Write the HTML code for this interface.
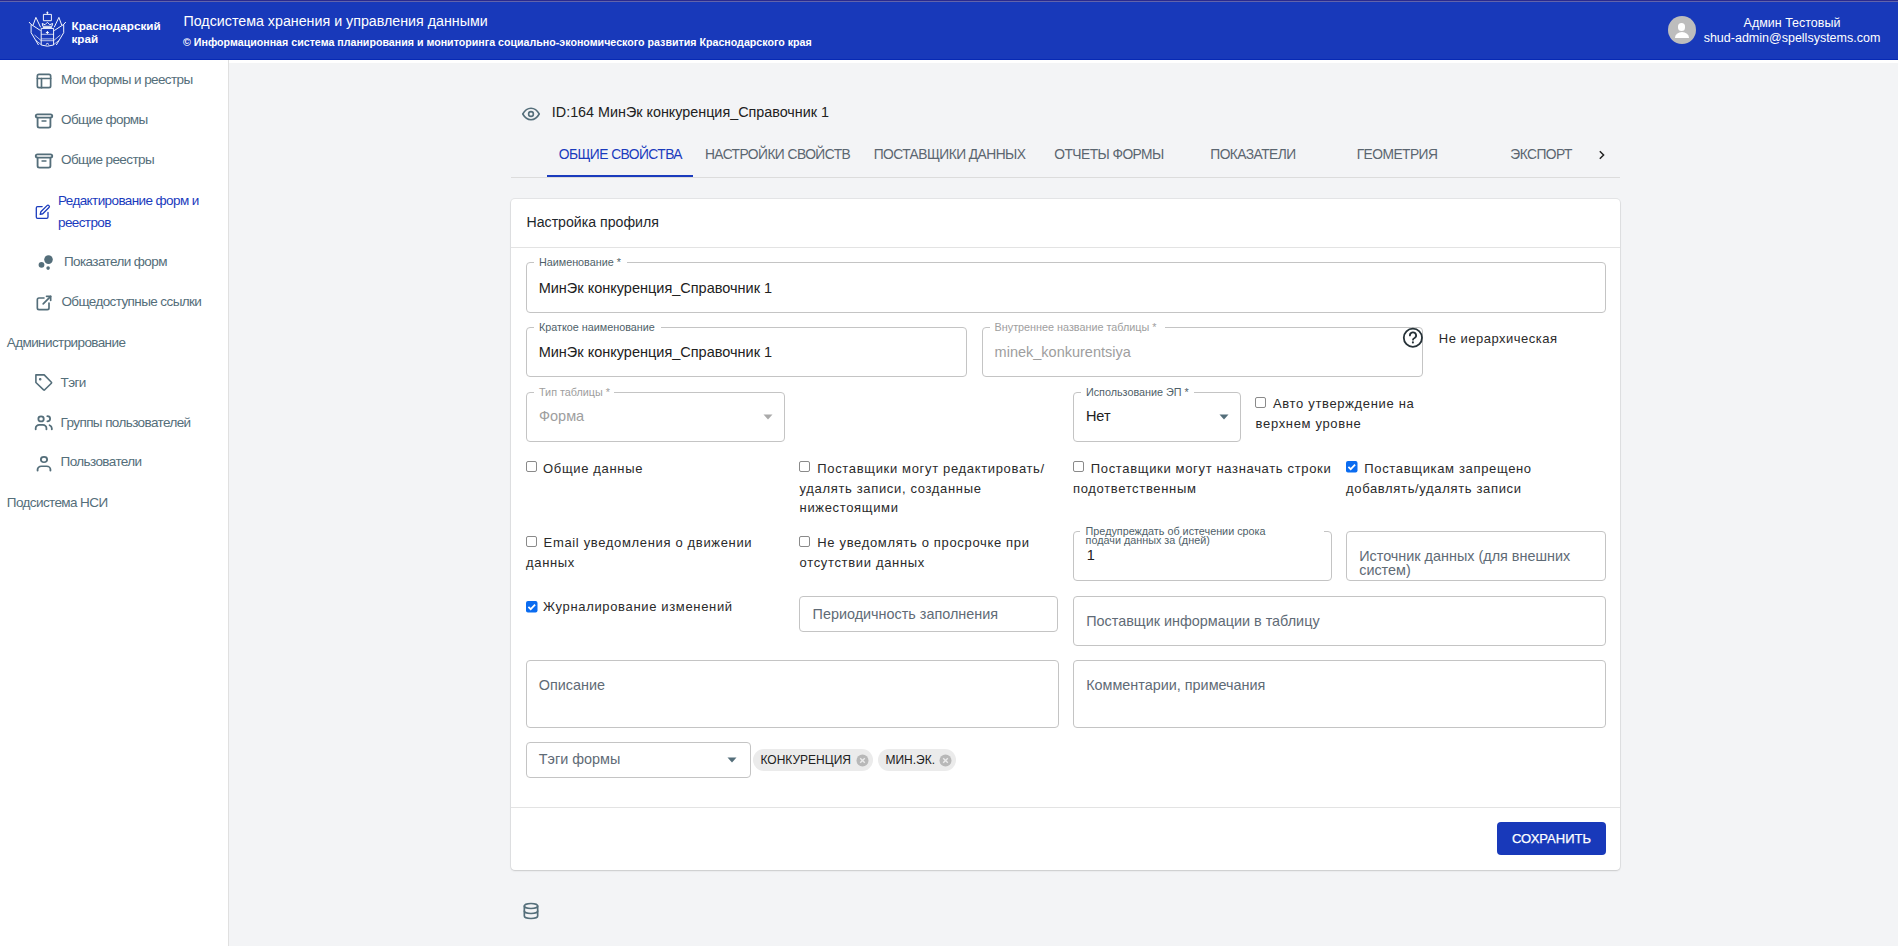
<!DOCTYPE html>
<html><head><meta charset="utf-8">
<style>
*{box-sizing:border-box;margin:0;padding:0}
html,body{width:1898px;height:946px;overflow:hidden;background:#f3f4f6;font-family:"Liberation Sans",sans-serif}
body{position:relative}
.a{position:absolute;white-space:nowrap}
svg.a{overflow:visible}
</style></head><body>
<div class="a" style="left:0px;top:0px;width:1898px;height:60px;background:#1839ba"></div>
<div class="a" style="left:0px;top:0px;width:1898px;height:1px;background:#2a2a8f"></div>
<div class="a" style="left:0px;top:1px;width:1898px;height:1px;background:#6264ab"></div>
<div class="a" style="left:0px;top:59px;width:1898px;height:1px;background:#0729b4"></div>
<svg class="a" style="left:27px;top:10px" width="42" height="39" viewBox="0 0 42 39" fill="none" stroke="#fff" stroke-width="0.95" stroke-linejoin="round">
<path d="M20.4 1.5v2.6M19.4 2.7h2"/>
<rect x="16.4" y="4.4" width="8" height="6.3"/>
<path d="M15.8 16.3l-0.6-2.8 2.8 1.2 2.4-2.4 2.4 2.4 2.8-1.2-0.6 2.8z"/>
<path d="M15.9 17.6h9"/>
<path d="M14.2 18.4h12.4v16.6l-6.2 1.2-6.2-1.2z"/>
<path d="M14.2 24.3h12.4M14.2 28.9h12.4M14.2 30.7h12.4" stroke-width="0.7"/>
<path d="M18.9 22.5h3M20.4 21v3"/>
<path d="M19.2 34.6a1.2 1.2 0 0 1 2.4 0"/>
<path d="M2 12l2.1 2.4v8.3l7.4 12.3"/>
<path d="M4.1 14.4l9.5 6.2"/>
<path d="M8.9 7.4l-2.9 7.9M8.9 7.4l4.7 9.9"/>
<path d="M7.5 25l6.5 5.5M9 30.5l5 4" stroke-width="0.7"/>
<path d="M38.8 12l-2.1 2.4v8.3l-7.4 12.3"/>
<path d="M36.7 14.4l-9.5 6.2"/>
<path d="M31.9 7.4l2.9 7.9M31.9 7.4l-4.7 9.9"/>
<path d="M33.3 25l-6.5 5.5M31.8 30.5l-5 4" stroke-width="0.7"/>
</svg>
<div class="a" style="left:71.5px;top:19.7px;font-size:11.7px;line-height:12.9px;font-weight:700;color:#fff">Краснодарский<br>край</div>
<div class="a" style="left:183.50px;top:13.84px;font-size:14.25px;line-height:14.25px;color:#fff">Подсистема хранения и управления данными</div>
<div class="a" style="left:183.00px;top:36.67px;font-size:10.67px;line-height:10.67px;color:#fff;font-weight:700">© Информационная система планирования и мониторинга социально-экономического развития Краснодарского края</div>
<div class="a" style="left:1668px;top:16px;width:28px;height:28px;border-radius:50%;background:#bdbdbd;overflow:hidden">
<div class="a" style="left:10px;top:7.2px;width:7.4px;height:7.4px;border-radius:50%;background:#fff"></div>
<div class="a" style="left:6.5px;top:16.2px;width:14.5px;height:5.9px;border-radius:7.25px 7.25px 0 0/5.9px 5.9px 0 0;background:#fff"></div>
</div>
<div class="a" style="left:1692px;top:0;width:200px;height:60px;text-align:center;color:#fff;font-size:12.5px"><div class="a" style="left:0;width:200px;top:16.82px;line-height:12.5px;text-align:center">Админ Тестовый</div><div class="a" style="left:0;width:200px;top:32.22px;line-height:12.5px;text-align:center">shud-admin@spellsystems.com</div></div>
<div class="a" style="left:0px;top:60px;width:228px;height:886px;background:#fff"></div>
<div class="a" style="left:228px;top:60px;width:1px;height:886px;background:#e0e0e0"></div>
<div class="a" style="left:229px;top:60px;width:1669px;height:3px;background:#fff"></div>
<div class="a" style="left:61.00px;top:72.57px;font-size:13.5px;line-height:13.5px;color:#546e7a;letter-spacing:-0.6px">Мои формы и реестры</div>
<div class="a" style="left:61.00px;top:113.37px;font-size:13.5px;line-height:13.5px;color:#546e7a;letter-spacing:-0.6px">Общие формы</div>
<div class="a" style="left:61.00px;top:153.37px;font-size:13.5px;line-height:13.5px;color:#546e7a;letter-spacing:-0.6px">Общие реестры</div>
<div class="a" style="left:58.00px;top:193.87px;font-size:13.5px;line-height:13.5px;color:#1a3bbd;letter-spacing:-0.6px">Редактирование форм и</div>
<div class="a" style="left:58.00px;top:215.87px;font-size:13.5px;line-height:13.5px;color:#1a3bbd;letter-spacing:-0.6px">реестров</div>
<div class="a" style="left:64.00px;top:255.07px;font-size:13.5px;line-height:13.5px;color:#546e7a;letter-spacing:-0.6px">Показатели форм</div>
<div class="a" style="left:61.40px;top:295.37px;font-size:13.5px;line-height:13.5px;color:#546e7a;letter-spacing:-0.6px">Общедоступные ссылки</div>
<div class="a" style="left:6.80px;top:335.87px;font-size:13.5px;line-height:13.5px;color:#546e7a;letter-spacing:-0.6px">Администрирование</div>
<div class="a" style="left:60.60px;top:375.57px;font-size:13.5px;line-height:13.5px;color:#546e7a;letter-spacing:-0.6px">Тэги</div>
<div class="a" style="left:60.60px;top:415.57px;font-size:13.5px;line-height:13.5px;color:#546e7a;letter-spacing:-0.6px">Группы пользователей</div>
<div class="a" style="left:60.60px;top:455.47px;font-size:13.5px;line-height:13.5px;color:#546e7a;letter-spacing:-0.6px">Пользователи</div>
<div class="a" style="left:6.80px;top:495.57px;font-size:13.5px;line-height:13.5px;color:#546e7a;letter-spacing:-0.6px">Подсистема НСИ</div>
<svg class="a" style="left:34px;top:71px" width="20" height="20" viewBox="0 0 24 24" fill="none" stroke="#546e7a" stroke-width="2" stroke-linecap="round" stroke-linejoin="round"><path d="M4 4m0 2a2 2 0 0 1 2 -2h12a2 2 0 0 1 2 2v12a2 2 0 0 1 -2 2h-12a2 2 0 0 1 -2 -2z"/><path d="M4 9h16"/><path d="M9 9v11"/></svg>
<svg class="a" style="left:33px;top:111px" width="22" height="20" viewBox="0 0 24 24" preserveAspectRatio="none" fill="none" stroke="#546e7a" stroke-width="2" stroke-linecap="round" stroke-linejoin="round"><path d="M3 4m0 2a2 2 0 0 1 2 -2h14a2 2 0 0 1 2 2v0a2 2 0 0 1 -2 2h-14a2 2 0 0 1 -2 -2z"/><path d="M5 8v10a2 2 0 0 0 2 2h10a2 2 0 0 0 2 -2v-10"/><path d="M10 12l4 0"/></svg>
<svg class="a" style="left:33px;top:151px" width="22" height="20" viewBox="0 0 24 24" preserveAspectRatio="none" fill="none" stroke="#546e7a" stroke-width="2" stroke-linecap="round" stroke-linejoin="round"><path d="M3 4m0 2a2 2 0 0 1 2 -2h14a2 2 0 0 1 2 2v0a2 2 0 0 1 -2 2h-14a2 2 0 0 1 -2 -2z"/><path d="M5 8v10a2 2 0 0 0 2 2h10a2 2 0 0 0 2 -2v-10"/><path d="M10 12l4 0"/></svg>
<svg class="a" style="left:34.6px;top:203.8px" width="15.6" height="15.6" viewBox="0 0 24 24" fill="none" stroke="#1a3bbd" stroke-width="2" stroke-linecap="round" stroke-linejoin="round"><path d="M11 4H4a2 2 0 0 0-2 2v14a2 2 0 0 0 2 2h14a2 2 0 0 0 2-2v-7"/><path d="M18.5 2.5a2.121 2.121 0 0 1 3 3L12 15l-4 1 1-4 9.5-9.5z"/></svg>
<svg class="a" style="left:37px;top:255px" width="18" height="18" viewBox="0 0 18 18"><circle cx="4.5" cy="9.8" r="2.9" fill="#546e7a"/><circle cx="11.5" cy="4.6" r="4.3" fill="#546e7a"/><circle cx="11.1" cy="13.1" r="1.8" fill="#546e7a"/></svg>
<svg class="a" style="left:34px;top:293px" width="20" height="20" viewBox="0 0 24 24" fill="none" stroke="#546e7a" stroke-width="2" stroke-linecap="round" stroke-linejoin="round"><path d="M12 6h-6a2 2 0 0 0 -2 2v10a2 2 0 0 0 2 2h10a2 2 0 0 0 2 -2v-6"/><path d="M11 13l9 -9"/><path d="M15 4h5v5"/></svg>
<svg class="a" style="left:33px;top:373px" width="20" height="20" viewBox="0 0 20 20" fill="none" stroke="#546e7a" stroke-width="1.6" stroke-linecap="round" stroke-linejoin="round"><path d="M2.9 1.9h8.3l7.2 7.3q0.5 0.5 0 1l-6.7 6.6q-0.6 0.5 -1.1 0l-7.7 -7.3z"/><circle cx="7.2" cy="6.3" r="0.5" fill="#546e7a"/></svg>
<svg class="a" style="left:32.5px;top:411.8px" width="21.5" height="20" viewBox="0 0 24 24" preserveAspectRatio="none" fill="none" stroke="#546e7a" stroke-width="2" stroke-linecap="round" stroke-linejoin="round"><path d="M9 8.3m-3 0a3 3 0 1 0 6 0a3 3 0 1 0 -6 0"/><path d="M3 21v-1.5a4 4 0 0 1 4 -4h4a4 4 0 0 1 4 4v1.5"/><path d="M16 5a3.1 3.1 0 0 1 0 6.2"/><path d="M21 21v-1.5a4 4 0 0 0 -2.5 -3.7"/></svg>
<svg class="a" style="left:33px;top:453.5px" width="22" height="19" viewBox="0 0 24 24" preserveAspectRatio="none" fill="none" stroke="#546e7a" stroke-width="2" stroke-linecap="round" stroke-linejoin="round"><path d="M8.6 7a3.4 3.4 0 1 0 6.8 0a3.4 3.4 0 0 0 -6.8 0"/><path d="M5 21v-1.5a4 4 0 0 1 4 -4h6a4 4 0 0 1 4 4v1.5"/></svg>
<svg class="a" style="left:520px;top:102.8px" width="22" height="22" viewBox="0 0 24 24" fill="none" stroke="#546e7a" stroke-width="1.75" stroke-linecap="round" stroke-linejoin="round"><circle cx="12" cy="12" r="2.6"/><path d="M21 12c-2.4 4.2 -5.4 6.2 -9 6.2c-3.6 0 -6.6 -2 -9 -6.2c2.4 -4.2 5.4 -6.2 9 -6.2c3.6 0 6.6 2 9 6.2"/></svg>
<div class="a" style="left:551.80px;top:104.75px;font-size:14.35px;line-height:14.35px;color:#212121">ID:164 МинЭк конкуренция_Справочник 1</div>
<div class="a" style="left:558.80px;top:148.02px;font-size:13.8px;line-height:13.8px;color:#1a3bbd;letter-spacing:-0.55px">ОБЩИЕ СВОЙСТВА</div>
<div class="a" style="left:704.90px;top:148.02px;font-size:13.8px;line-height:13.8px;color:#5b6670;letter-spacing:-0.55px">НАСТРОЙКИ СВОЙСТВ</div>
<div class="a" style="left:873.70px;top:148.02px;font-size:13.8px;line-height:13.8px;color:#5b6670;letter-spacing:-0.55px">ПОСТАВЩИКИ ДАННЫХ</div>
<div class="a" style="left:1054.30px;top:148.02px;font-size:13.8px;line-height:13.8px;color:#5b6670;letter-spacing:-0.55px">ОТЧЕТЫ ФОРМЫ</div>
<div class="a" style="left:1210.30px;top:148.02px;font-size:13.8px;line-height:13.8px;color:#5b6670;letter-spacing:-0.55px">ПОКАЗАТЕЛИ</div>
<div class="a" style="left:1356.70px;top:148.02px;font-size:13.8px;line-height:13.8px;color:#5b6670;letter-spacing:-0.55px">ГЕОМЕТРИЯ</div>
<div class="a" style="left:1510.30px;top:148.02px;font-size:13.8px;line-height:13.8px;color:#5b6670;letter-spacing:-0.55px">ЭКСПОРТ</div>
<svg class="a" style="left:1596px;top:149px" width="12" height="12" viewBox="0 0 12 12" fill="none" stroke="#222" stroke-width="1.5"><path d="M3.8 2.2l3.8 3.8-3.8 3.8"/></svg>
<div class="a" style="left:511px;top:177px;width:1109px;height:1px;background:#dcdcdc"></div>
<div class="a" style="left:547px;top:175px;width:146px;height:2px;background:#1a3bbd"></div>
<div class="a" style="left:511px;top:199px;width:1109px;height:671px;background:#fff;border-radius:4px;box-shadow:0 0 0 1px rgba(0,0,0,0.06),0 1px 2px rgba(0,0,0,0.12)"></div>
<div class="a" style="left:526.50px;top:214.92px;font-size:14.15px;line-height:14.15px;color:#1e272c">Настройка профиля</div>
<div class="a" style="left:511px;top:247px;width:1109px;height:1px;background:#e3e3e3"></div>
<div class="a" style="left:511px;top:807px;width:1109px;height:1px;background:#e3e3e3"></div>
<div class="a" style="left:526px;top:262px;width:1080px;height:51px;border:1px solid #c4c4c4;border-radius:4px;background:#fff"></div>
<div class="a" style="left:534px;top:261px;width:93px;height:3px;background:#fff"></div>
<div class="a" style="left:538.90px;top:256.76px;font-size:10.8px;line-height:10.8px;color:#4f5f69">Наименование *</div>
<div class="a" style="left:538.70px;top:280.53px;font-size:14.5px;line-height:14.5px;color:#212121">МинЭк конкуренция_Справочник 1</div>
<div class="a" style="left:526px;top:327px;width:441px;height:50px;border:1px solid #c4c4c4;border-radius:4px;background:#fff"></div>
<div class="a" style="left:534px;top:326px;width:127px;height:3px;background:#fff"></div>
<div class="a" style="left:538.90px;top:321.66px;font-size:10.8px;line-height:10.8px;color:#4f5f69">Краткое наименование</div>
<div class="a" style="left:538.70px;top:345.23px;font-size:14.5px;line-height:14.5px;color:#212121">МинЭк конкуренция_Справочник 1</div>
<div class="a" style="left:982px;top:327px;width:441px;height:50px;border:1px solid #c4c4c4;border-radius:4px;background:#fff"></div>
<div class="a" style="left:990px;top:326px;width:175px;height:3px;background:#fff"></div>
<div class="a" style="left:994.60px;top:321.66px;font-size:10.8px;line-height:10.8px;color:#9e9e9e">Внутреннее название таблицы *</div>
<div class="a" style="left:994.60px;top:344.53px;font-size:14.5px;line-height:14.5px;color:#9e9e9e">minek_konkurentsiya</div>
<svg class="a" style="left:1401px;top:326px" width="24" height="24" viewBox="0 0 24 24" fill="none" stroke="#263238" stroke-width="1.8" stroke-linecap="round" stroke-linejoin="round"><circle cx="11.9" cy="11.8" r="9.1"/><path d="M8.9 9.4a3.1 3.05 0 1 1 4.4 2.8c-.8.4-1.3.9-1.3 1.5"/><path d="M11.9 16.4v.05" stroke-width="2.1"/></svg>
<div class="a" style="left:1438.80px;top:331.60px;font-size:13px;line-height:13px;color:#2a2a2a;letter-spacing:0.5px">Не иерархическая</div>
<div class="a" style="left:526px;top:392px;width:259px;height:50px;border:1px solid #c4c4c4;border-radius:4px;background:#fff"></div>
<div class="a" style="left:534px;top:391px;width:80px;height:3px;background:#fff"></div>
<div class="a" style="left:539.00px;top:386.66px;font-size:10.8px;line-height:10.8px;color:#9e9e9e">Тип таблицы *</div>
<div class="a" style="left:539.00px;top:408.53px;font-size:14.5px;line-height:14.5px;color:#9e9e9e">Форма</div>
<svg class="a" style="left:763px;top:414px" width="10" height="6" viewBox="0 0 10 6"><path d="M0.5 0.5h9l-4.5 5z" fill="#aaaaaa"/></svg>
<div class="a" style="left:1073px;top:392px;width:168px;height:50px;border:1px solid #c4c4c4;border-radius:4px;background:#fff"></div>
<div class="a" style="left:1081px;top:391px;width:113px;height:3px;background:#fff"></div>
<div class="a" style="left:1085.90px;top:386.66px;font-size:10.8px;line-height:10.8px;color:#4f5f69">Использование ЭП *</div>
<div class="a" style="left:1085.90px;top:408.53px;font-size:14.5px;line-height:14.5px;color:#212121">Нет</div>
<svg class="a" style="left:1219px;top:414px" width="10" height="6" viewBox="0 0 10 6"><path d="M0.5 0.5h9l-4.5 5z" fill="#546e7a"/></svg>
<div class="a" style="left:1255px;top:396.7px;width:11px;height:11px;border:1px solid #8a8a8a;border-radius:2px;background:#fff"></div>
<div class="a" style="left:1273.00px;top:397.10px;font-size:13px;line-height:13px;color:#2a2a2a;letter-spacing:0.66px">Авто утверждение на</div>
<div class="a" style="left:1255.60px;top:417.20px;font-size:13px;line-height:13px;color:#2a2a2a;letter-spacing:0.66px">верхнем уровне</div>
<div class="a" style="left:526px;top:461px;width:11px;height:11px;border:1px solid #8a8a8a;border-radius:2px;background:#fff"></div>
<div class="a" style="left:543.00px;top:462.00px;font-size:13px;line-height:13px;color:#2a2a2a;letter-spacing:0.66px">Общие данные</div>
<div class="a" style="left:799px;top:461px;width:11px;height:11px;border:1px solid #8a8a8a;border-radius:2px;background:#fff"></div>
<div class="a" style="left:817.30px;top:462.00px;font-size:13px;line-height:13px;color:#2a2a2a;letter-spacing:0.66px">Поставщики могут редактировать/</div>
<div class="a" style="left:799.60px;top:481.60px;font-size:13px;line-height:13px;color:#2a2a2a;letter-spacing:0.66px">удалять записи, созданные</div>
<div class="a" style="left:799.60px;top:500.80px;font-size:13px;line-height:13px;color:#2a2a2a;letter-spacing:0.66px">нижестоящими</div>
<div class="a" style="left:1073px;top:461px;width:11px;height:11px;border:1px solid #8a8a8a;border-radius:2px;background:#fff"></div>
<div class="a" style="left:1090.80px;top:462.00px;font-size:13px;line-height:13px;color:#2a2a2a;letter-spacing:0.66px">Поставщики могут назначать строки</div>
<div class="a" style="left:1073.00px;top:481.60px;font-size:13px;line-height:13px;color:#2a2a2a;letter-spacing:0.66px">подответственным</div>
<svg class="a" style="left:1346px;top:461px" width="11.5" height="11.5" viewBox="0 0 12 12"><rect x="0" y="0" width="12" height="12" rx="2" fill="#0b6cf0"/><path d="M2.5 6.1l2.4 2.4 4.6-4.8" fill="none" stroke="#fff" stroke-width="1.8"/></svg>
<div class="a" style="left:1364.30px;top:462.00px;font-size:13px;line-height:13px;color:#2a2a2a;letter-spacing:0.66px">Поставщикам запрещено</div>
<div class="a" style="left:1346.00px;top:481.60px;font-size:13px;line-height:13px;color:#2a2a2a;letter-spacing:0.66px">добавлять/удалять записи</div>
<div class="a" style="left:526px;top:535.5px;width:11px;height:11px;border:1px solid #8a8a8a;border-radius:2px;background:#fff"></div>
<div class="a" style="left:543.60px;top:536.10px;font-size:13px;line-height:13px;color:#2a2a2a;letter-spacing:0.66px">Email уведомления о движении</div>
<div class="a" style="left:526.00px;top:556.00px;font-size:13px;line-height:13px;color:#2a2a2a;letter-spacing:0.66px">данных</div>
<div class="a" style="left:799px;top:535.5px;width:11px;height:11px;border:1px solid #8a8a8a;border-radius:2px;background:#fff"></div>
<div class="a" style="left:817.30px;top:536.10px;font-size:13px;line-height:13px;color:#2a2a2a;letter-spacing:0.66px">Не уведомлять о просрочке при</div>
<div class="a" style="left:799.60px;top:556.00px;font-size:13px;line-height:13px;color:#2a2a2a;letter-spacing:0.66px">отсутствии данных</div>
<div class="a" style="left:1073px;top:531px;width:259px;height:50px;border:1px solid #c4c4c4;border-radius:4px;background:#fff"></div>
<div class="a" style="left:1080px;top:530px;width:244px;height:3px;background:#fff"></div>
<div class="a" style="left:1085.60px;top:525.56px;font-size:10.8px;line-height:10.8px;color:#4f5f69">Предупреждать об истечении срока</div>
<div class="a" style="left:1085.60px;top:535.16px;font-size:10.8px;line-height:10.8px;color:#4f5f69">подачи данных за (дней)</div>
<div class="a" style="left:1086.80px;top:548.33px;font-size:14.5px;line-height:14.5px;color:#212121">1</div>
<div class="a" style="left:1346px;top:531px;width:260px;height:50px;border:1px solid #c4c4c4;border-radius:4px;background:#fff"></div>
<div class="a" style="left:1359.20px;top:548.51px;font-size:14.4px;line-height:14.4px;color:#5f6b76">Источник данных (для внешних</div>
<div class="a" style="left:1359.20px;top:562.61px;font-size:14.4px;line-height:14.4px;color:#5f6b76">систем)</div>
<svg class="a" style="left:526px;top:600.5px" width="11.5" height="11.5" viewBox="0 0 12 12"><rect x="0" y="0" width="12" height="12" rx="2" fill="#0b6cf0"/><path d="M2.5 6.1l2.4 2.4 4.6-4.8" fill="none" stroke="#fff" stroke-width="1.8"/></svg>
<div class="a" style="left:543.00px;top:600.30px;font-size:13px;line-height:13px;color:#2a2a2a;letter-spacing:0.66px">Журналирование изменений</div>
<div class="a" style="left:799px;top:596px;width:259px;height:36px;border:1px solid #c4c4c4;border-radius:4px;background:#fff"></div>
<div class="a" style="left:812.60px;top:606.71px;font-size:14.4px;line-height:14.4px;color:#5f6b76">Периодичность заполнения</div>
<div class="a" style="left:1073px;top:596px;width:533px;height:50px;border:1px solid #c4c4c4;border-radius:4px;background:#fff"></div>
<div class="a" style="left:1086.20px;top:614.11px;font-size:14.4px;line-height:14.4px;color:#5f6b76">Поставщик информации в таблицу</div>
<div class="a" style="left:526px;top:660px;width:533px;height:68px;border:1px solid #c4c4c4;border-radius:4px;background:#fff"></div>
<div class="a" style="left:538.80px;top:677.61px;font-size:14.4px;line-height:14.4px;color:#5f6b76">Описание</div>
<div class="a" style="left:1073px;top:660px;width:533px;height:68px;border:1px solid #c4c4c4;border-radius:4px;background:#fff"></div>
<div class="a" style="left:1086.20px;top:677.81px;font-size:14.4px;line-height:14.4px;color:#5f6b76">Комментарии, примечания</div>
<div class="a" style="left:526px;top:742px;width:225px;height:36px;border:1px solid #c4c4c4;border-radius:4px;background:#fff"></div>
<div class="a" style="left:538.80px;top:752.21px;font-size:14.4px;line-height:14.4px;color:#5f6b76">Тэги формы</div>
<svg class="a" style="left:727px;top:757px" width="10" height="6" viewBox="0 0 10 6"><path d="M0.5 0.5h9l-4.5 5z" fill="#546e7a"/></svg>
<div class="a" style="left:753px;top:749px;width:120px;height:22px;background:#ebebeb;border-radius:11px"></div>
<div class="a" style="left:760.50px;top:753.84px;font-size:12px;line-height:12px;color:#212121">КОНКУРЕНЦИЯ</div>
<svg class="a" style="left:855.5px;top:753.5px" width="13" height="13" viewBox="0 0 13 13"><circle cx="6.5" cy="6.5" r="6" fill="#b8b8b8"/><path d="M4.2 4.2l4.6 4.6M8.8 4.2l-4.6 4.6" stroke="#ebebeb" stroke-width="1.4"/></svg>
<div class="a" style="left:878px;top:749px;width:78px;height:22px;background:#ebebeb;border-radius:11px"></div>
<div class="a" style="left:885.50px;top:753.84px;font-size:12px;line-height:12px;color:#212121">МИН.ЭК.</div>
<svg class="a" style="left:938.5px;top:753.5px" width="13" height="13" viewBox="0 0 13 13"><circle cx="6.5" cy="6.5" r="6" fill="#b8b8b8"/><path d="M4.2 4.2l4.6 4.6M8.8 4.2l-4.6 4.6" stroke="#ebebeb" stroke-width="1.4"/></svg>
<div class="a" style="left:1497px;top:822px;width:109px;height:33px;background:#1839ba;border-radius:4px"></div>
<div class="a" style="left:1497px;width:109px;top:831.90px;font-size:13px;line-height:13px;color:#fff;text-align:center;-webkit-text-stroke:0.25px #fff">СОХРАНИТЬ</div>
<svg class="a" style="left:521px;top:901px" width="20" height="20" viewBox="0 0 24 24" fill="none" stroke="#546e7a" stroke-width="2" stroke-linecap="round" stroke-linejoin="round"><path d="M12 6m-8 0a8 3 0 1 0 16 0a8 3 0 1 0 -16 0"/><path d="M4 6v6a8 3 0 0 0 16 0v-6"/><path d="M4 12v6a8 3 0 0 0 16 0v-6"/></svg>
</body></html>
